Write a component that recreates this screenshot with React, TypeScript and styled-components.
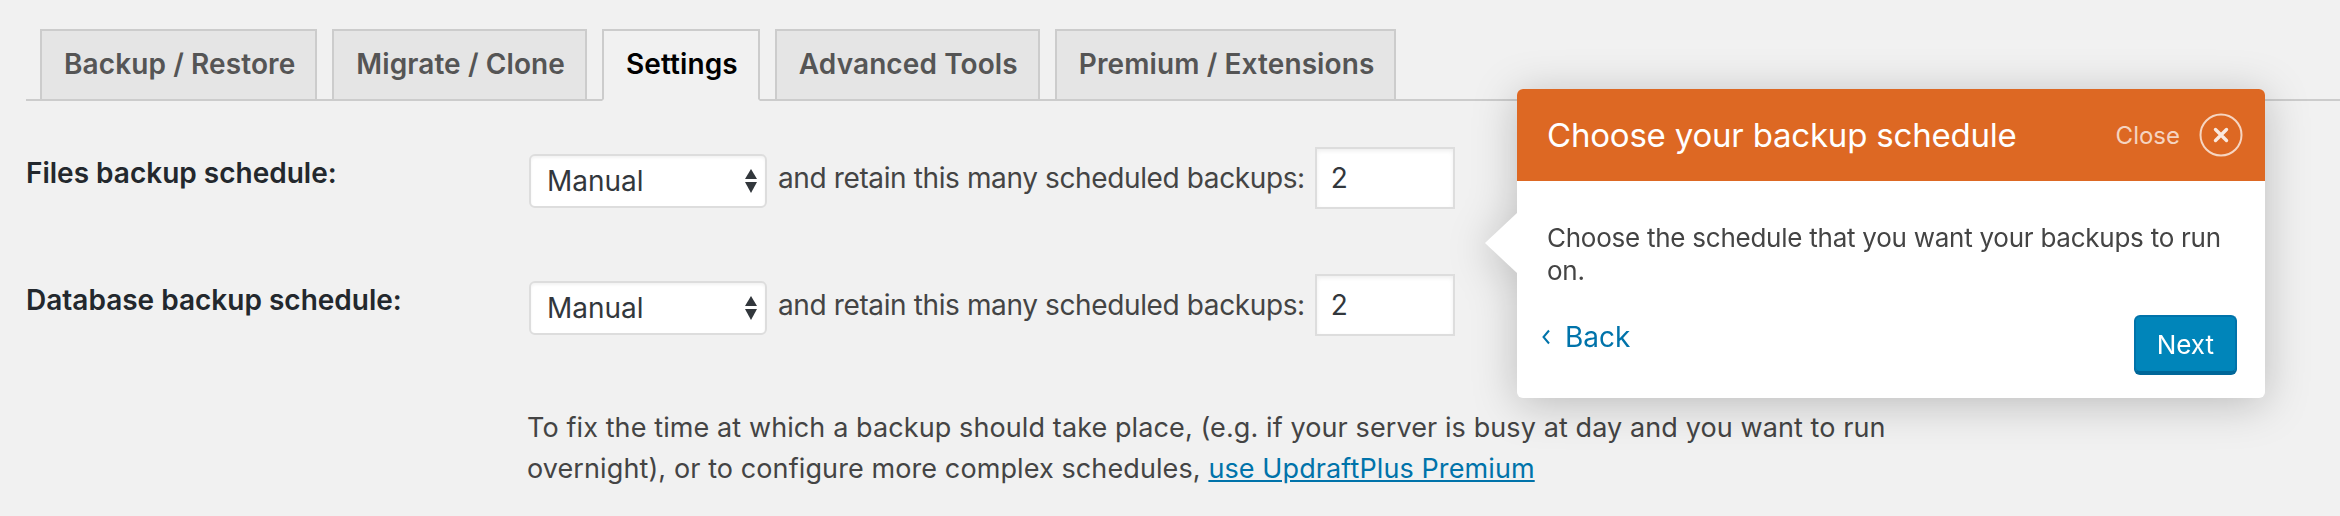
import React from 'react';
import styled, { createGlobalStyle } from 'styled-components';

const GlobalStyle = createGlobalStyle`
    body {
        margin: 0;
        background: #f1f1f1;
        font-family: Inter, "Liberation Sans", sans-serif;
        color: #444;
    }
`;

const Page = styled.div`
    position: relative;
    width: 2340px;
    height: 516px;
    overflow: hidden;
    box-sizing: border-box;
    padding: 29px 0 0 26px;
`;

const TabBar = styled.nav`
    display: flex;
    gap: 15px;
    padding-left: 14px;
    border-bottom: 2px solid #ccc;
`;

const Tab = styled.a<{ $active?: boolean; $minWidth?: number }>`
    box-sizing: border-box;
    height: 72px;
    min-width: ${(p) => (p.$minWidth ? `${p.$minWidth}px` : 'auto')};
    margin-bottom: -2px;
    padding: 0 20px 2px 22px;
    display: flex;
    align-items: center;
    font-size: 28px;
    font-weight: 600;
    letter-spacing: 0.1px;
    text-decoration: none;
    color: ${(p) => (p.$active ? '#000' : '#555')};
    background: ${(p) => (p.$active ? '#f1f1f1' : '#e5e5e5')};
    border: 2px solid #ccc;
    border-bottom-color: ${(p) => (p.$active ? '#f1f1f1' : '#ccc')};
`;

const Form = styled.div`
    padding-top: 46px;
`;

const Row = styled.div`
    display: grid;
    grid-template-columns: 501px 1fr;
    height: 127px;
`;

const Label = styled.label`
    padding-top: 8px;
    font-size: 28px;
    line-height: 36px;
    font-weight: 600;
    color: #23282d;
`;

const Field = styled.div`
    display: flex;
    align-items: center;
    gap: 10px;
    height: 62px;
    font-size: 28px;
    line-height: 36px;
    letter-spacing: -0.38px;
    color: #444;
`;

const SelectWrap = styled.div`
    position: relative;
    margin: 6px 1px 0 2px;
`;

const Select = styled.select`
    appearance: none;
    display: block;
    box-sizing: border-box;
    width: 238px;
    height: 54px;
    padding: 0 40px 0 16px;
    font-family: inherit;
    font-size: 28px;
    color: #32373c;
    background: #fff;
    border: 2px solid #ddd;
    border-radius: 6px;
    box-shadow: inset 0 2px 3px rgba(0, 0, 0, 0.05);
    outline: none;
`;

const SelectArrows = styled.svg`
    position: absolute;
    right: 9px;
    top: 15px;
    pointer-events: none;
`;

const NumberInput = styled.input`
    box-sizing: border-box;
    width: 140px;
    height: 62px;
    padding: 0 14px;
    font-family: inherit;
    font-size: 28px;
    color: #32373c;
    background: #fff;
    border: 2px solid #ddd;
    box-shadow: inset 0 2px 4px rgba(0, 0, 0, 0.07);
    outline: none;
`;

const Note = styled.p`
    margin: 6px 0 0 501px;
    font-size: 27px;
    line-height: 41px;
    letter-spacing: 0.1px;
    color: #444;
`;

const Link = styled.a`
    color: #0073aa;
    text-decoration: underline;
`;

const Pointer = styled.div`
    position: absolute;
    left: 1517px;
    top: 89px;
    width: 748px;
    height: 309px;
    display: flex;
    flex-direction: column;
    background: #fff;
    border-radius: 6px;
    filter: drop-shadow(0 6px 22px rgba(0, 0, 0, 0.22));
`;

const PointerArrow = styled.div`
    position: absolute;
    left: -32px;
    top: 124px;
    width: 0;
    height: 0;
    border-top: 30px solid transparent;
    border-bottom: 30px solid transparent;
    border-right: 32px solid #fff;
`;

const PointerHeader = styled.div`
    display: flex;
    align-items: center;
    height: 92px;
    padding: 0 22px 0 30px;
    background: #dd6823;
    border-radius: 6px 6px 0 0;
`;

const PointerTitle = styled.h3`
    flex: 1;
    margin: 0;
    font-size: 33px;
    font-weight: 400;
    letter-spacing: -0.2px;
    color: #fff;
`;

const CloseLink = styled.a`
    display: flex;
    align-items: center;
    gap: 19px;
    font-size: 24px;
    color: rgba(255, 255, 255, 0.72);
`;

const PointerBody = styled.div`
    flex: 1;
    display: flex;
    flex-direction: column;
    padding: 40px 28px 25px 30px;
`;

const PointerText = styled.p`
    margin: 0;
    font-size: 26px;
    line-height: 33px;
    letter-spacing: -0.25px;
    color: #444;
`;

const PointerFooter = styled.div`
    margin-top: auto;
    display: flex;
    align-items: center;
    justify-content: space-between;
`;

const BackLink = styled.a`
    display: flex;
    align-items: center;
    gap: 14px;
    margin-left: -6px;
    margin-bottom: 14px;
    font-size: 28px;
    color: #0073aa;
`;

const NextButton = styled.button`
    box-sizing: border-box;
    height: 58px;
    padding: 0 21px;
    font-family: inherit;
    font-size: 26px;
    color: #fff;
    background: #0085ba;
    border: 2px solid #0073aa;
    border-bottom-color: #006799;
    border-radius: 6px;
    box-shadow: 0 2px 0 #006799;
`;

const tabs: { label: string; minWidth?: number }[] = [
    { label: 'Backup / Restore' },
    { label: 'Migrate / Clone', minWidth: 242 },
    { label: 'Settings' },
    { label: 'Advanced Tools' },
    { label: 'Premium / Extensions' },
];

const ScheduleRow: React.FC<{ label: string }> = ({ label }) => (
    <Row>
        <Label>{label}</Label>
        <Field>
            <SelectWrap>
                <Select defaultValue="manual">
                    <option value="manual">Manual</option>
                </Select>
                <SelectArrows width="14" height="24" viewBox="0 0 14 24">
                    <path d="M7 0 L13 10 L1 10 Z" fill="#32373c" />
                    <path d="M1 13 L13 13 L7 24 Z" fill="#32373c" />
                </SelectArrows>
            </SelectWrap>
            and retain this many scheduled backups:
            <NumberInput type="number" defaultValue={2} />
        </Field>
    </Row>
);

export default function App() {
    return (
        <Page>
            <GlobalStyle />
            <TabBar>
                {tabs.map((t) => (
                    <Tab key={t.label} $active={t.label === 'Settings'} $minWidth={t.minWidth}>
                        {t.label}
                    </Tab>
                ))}
            </TabBar>
            <Form>
                <ScheduleRow label="Files backup schedule:" />
                <ScheduleRow label="Database backup schedule:" />
                <Note>
                    To fix the time at which a backup should take place, (e.g. if your server is busy at day and you want to run
                    <br />
                    overnight), or to configure more complex schedules, <Link href="#">use UpdraftPlus Premium</Link>
                </Note>
            </Form>

            <Pointer>
                <PointerArrow />
                <PointerHeader>
                    <PointerTitle>Choose your backup schedule</PointerTitle>
                    <CloseLink>
                        Close
                        <svg width="44" height="44" viewBox="0 0 44 44">
                            <circle cx="22" cy="22" r="20.5" fill="none" stroke="rgba(255,255,255,0.72)" strokeWidth="2" />
                            <path d="M16.5 16.5 L27.5 27.5 M27.5 16.5 L16.5 27.5" stroke="rgba(255,255,255,0.85)" strokeWidth="3.4" strokeLinecap="round" />
                        </svg>
                    </CloseLink>
                </PointerHeader>
                <PointerBody>
                    <PointerText>
                        Choose the schedule that you want your backups to run
                        <br />
                        on.
                    </PointerText>
                    <PointerFooter>
                        <BackLink>
                            <svg width="10" height="16" viewBox="0 0 10 16">
                                <path d="M8 1.5 L2.5 8 L8 14.5" fill="none" stroke="#0073aa" strokeWidth="2" />
                            </svg>
                            Back
                        </BackLink>
                        <NextButton>Next</NextButton>
                    </PointerFooter>
                </PointerBody>
            </Pointer>
        </Page>
    );
}
